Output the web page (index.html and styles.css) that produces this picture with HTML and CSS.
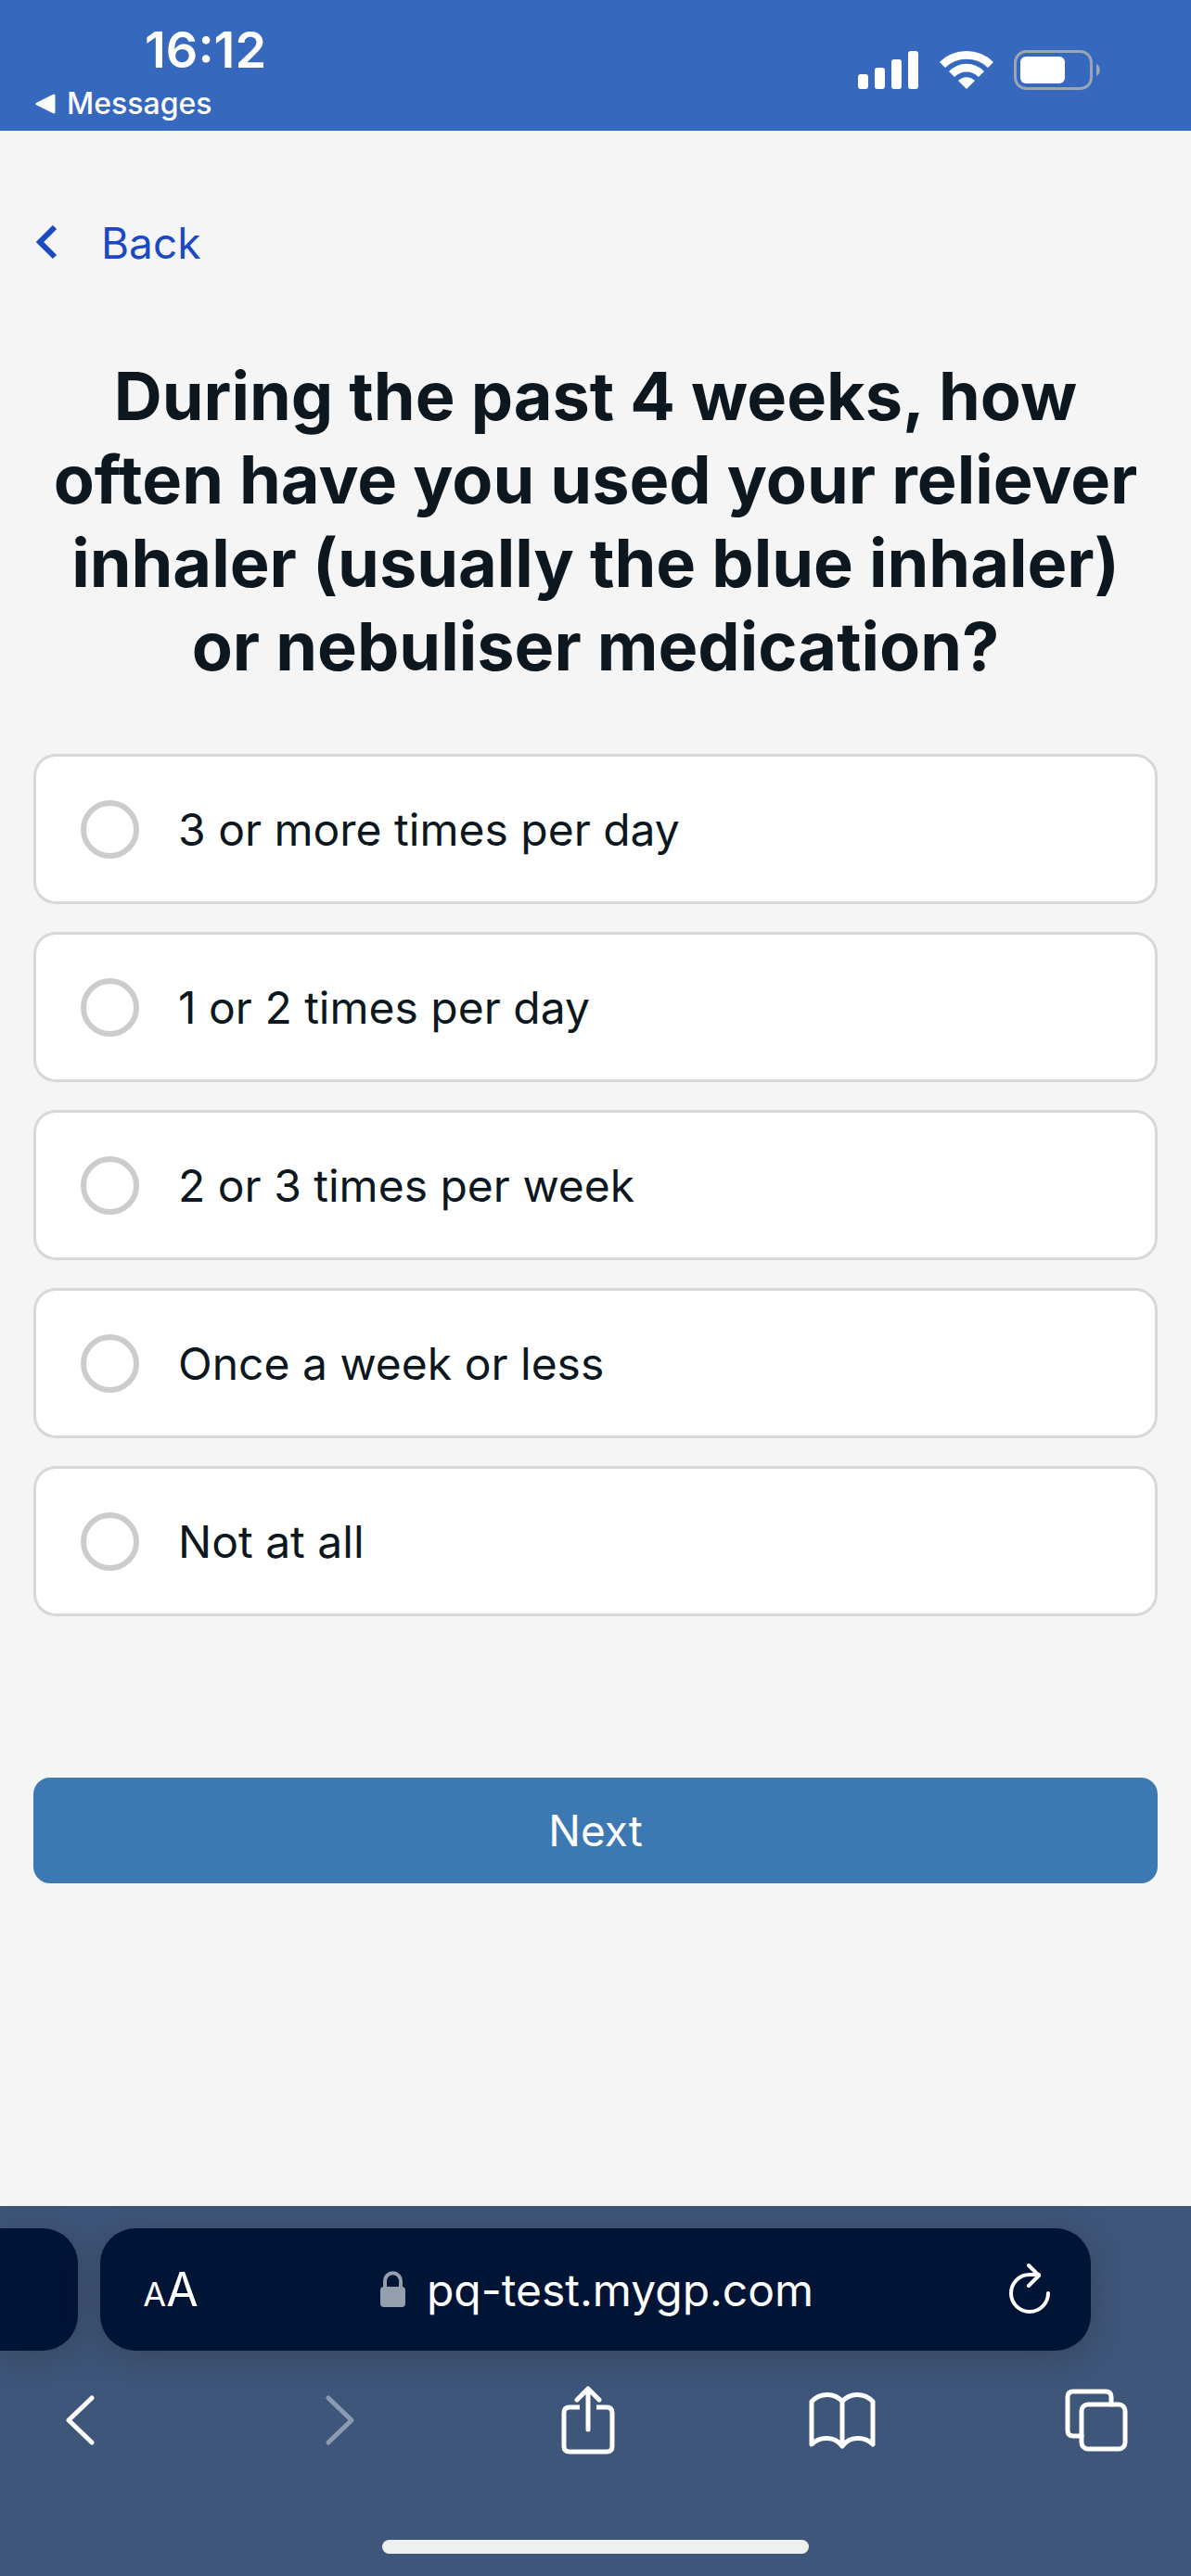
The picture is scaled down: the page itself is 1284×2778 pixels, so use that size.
FILE: index.html
```html
<!DOCTYPE html>
<html lang="en">
<head>
    <meta charset="UTF-8">
    <meta name="viewport" content="width=device-width, initial-scale=1">
    <title>myGP questionnaire</title>
    <link rel="stylesheet" href="styles.css">
</head>
<body>
    <header class="status-bar">
        <div class="status-left">
            <div class="time">16:12</div>
            <a class="return-link" href="#">
                <svg width="22" height="22" viewBox="0 0 22 22"><path d="M20 2v18L2 11z" fill="#fff" stroke="#fff" stroke-width="3" stroke-linejoin="round"/></svg>
                Messages
            </a>
        </div>
        <div class="status-icons">
            <svg width="66" height="44" viewBox="0 0 66 44" fill="#fff">
                <rect x="0" y="26" width="11" height="16" rx="3"/>
                <rect x="18" y="19" width="11" height="23" rx="3"/>
                <rect x="36" y="10" width="11" height="32" rx="3"/>
                <rect x="54" y="1" width="11" height="41" rx="3"/>
            </svg>
            <svg width="58" height="44" viewBox="0 0 58 44" fill="#fff">
                <path d="M0 13A41 41 0 0 1 58 13L52 19A33 33 0 0 0 6 19Z"/>
                <path d="M10 23A26 26 0 0 1 48 23L42 29A18 18 0 0 0 16 29Z"/>
                <path d="M20 33A12.500 12.500 0 0 1 38 33L29 42Z"/>
            </svg>
            <svg width="94" height="44" viewBox="0 0 94 44">
                <rect x="1.500" y="1.500" width="82" height="40" rx="12" fill="none" stroke="#9ba5b3" stroke-width="3"/>
                <rect x="7" y="7" width="48" height="29" rx="6" fill="#fff"/>
                <path d="M89 15c5 2 5 11 0 13z" fill="#9ba5b3"/>
            </svg>
        </div>
    </header>

    <main class="page">
        <a class="back-link" href="#">
            <svg width="24" height="38" viewBox="0 0 24 38"><path d="M20 2L4 18l16 16" fill="none" stroke="#1c49c2" stroke-width="6"/></svg>
            Back
        </a>
        <form class="question-form" onsubmit="return false">
            <h1 id="question">During the past 4 weeks, how often have you used your reliever inhaler (usually the blue inhaler) or nebuliser medication?</h1>
            <div class="options" role="radiogroup" aria-labelledby="question">
                <label class="option"><input type="radio" name="usage" value="1">3 or more times per day</label>
                <label class="option"><input type="radio" name="usage" value="2">1 or 2 times per day</label>
                <label class="option"><input type="radio" name="usage" value="3">2 or 3 times per week</label>
                <label class="option"><input type="radio" name="usage" value="4">Once a week or less</label>
                <label class="option"><input type="radio" name="usage" value="5">Not at all</label>
            </div>
            <button class="next-button" type="submit">Next</button>
        </form>
    </main>

    <footer class="browser-bar">
        <div class="address-row">
            <div class="other-tab"></div>
            <div class="address">
                <button class="text-size" aria-label="Text size"><span class="small-a">A</span>A</button>
                <div class="site">
                    <svg width="28" height="40" viewBox="0 0 28 40">
                        <rect x="0" y="17" width="27" height="22" rx="4" fill="#949eae"/>
                        <path d="M5 18v-6c0-13 17-13 17 0v6" fill="none" stroke="#949eae" stroke-width="4"/>
                    </svg>
                    pq-test.mygp.com
                </div>
                <button class="reload" aria-label="Reload">
                    <svg width="46" height="56" viewBox="0 0 46 56" fill="none" stroke="#fff" stroke-width="4" stroke-linecap="round" stroke-linejoin="round">
                        <path d="M43 32A20 20 0 1 1 23 12h10M22 2l11 11-11 11"/>
                    </svg>
                </button>
            </div>
        </div>
        <nav class="toolbar">
            <button aria-label="Go back"><svg width="32" height="56" viewBox="0 0 32 56"><path d="M29 4L4 28l25 24"/></svg></button>
            <button aria-label="Go forward" disabled><svg width="46" height="56" viewBox="0 0 46 56"><path d="M17 4l25 24-25 24"/></svg></button>
            <button aria-label="Share"><svg width="58" height="74" viewBox="0 0 58 74"><path stroke-linecap="butt" d="M20 23H9q-6 0-6 6v36q0 6 6 6h40q6 0 6-6V29q0-6-6-6H38"/><path d="M29 47V3M17 15L29 3l12 12"/></svg></button>
            <button aria-label="Bookmarks"><svg width="72" height="62" viewBox="0 0 72 62"><path d="M36 11C28 1 12 1 3 11v46c9-9 25-9 33 2 8-11 24-11 33-2V11C60 1 44 1 36 11zv48"/></svg></button>
            <button aria-label="Tabs"><svg width="68" height="68" viewBox="0 0 68 68"><rect x="18" y="17" width="47" height="48" rx="7"/><path d="M50 17V9q0-6-6-6H9q-6 0-6 6v36q0 6 6 6h9"/></svg></button>
        </nav>
        <div class="home-indicator"></div>
    </footer>
</body>
</html>
```

FILE: styles.css
```css
* {
    box-sizing: border-box;
}

body {
    margin: 0;
    min-height: 100vh;
    display: flex;
    flex-direction: column;
    font-family: Inter, "Liberation Sans", sans-serif;
    font-size: 48px;
    color: #0c1720;
    background-color: #f5f5f5;
}

svg {
    display: block;
    flex: none;
}

a {
    text-decoration: none;
}

button {
    padding: 0;
    border: none;
    background: none;
    color: white;
    font-family: inherit;
    font-size: 46px;
    cursor: pointer;
}

.status-bar {
    display: flex;
    justify-content: space-between;
    height: 141px;
    padding: 24px 97px 0 38px;
    background-color: #3668bd;
    color: white;
}

.time {
    padding-left: 118px;
    font-size: 54px;
    font-weight: 600;
    line-height: 60px;
}

.return-link {
    display: flex;
    align-items: center;
    gap: 12px;
    margin-top: 8px;
    color: white;
    font-size: 32px;
    font-weight: 500;
    line-height: 40px;
}

.status-icons {
    display: flex;
    gap: 22px;
    padding-top: 30px;
}

.page {
    flex: 1;
    padding: 88px 36px;
}

.back-link {
    display: inline-flex;
    align-items: center;
    gap: 46px;
    padding-left: 3px;
    color: #1c49c2;
    font-size: 46px;
    line-height: 66px;
}

h1 {
    margin: 87px 0 71px;
    font-size: 72px;
    font-weight: 700;
    line-height: 90px;
    text-align: center;
}

.options {
    display: flex;
    flex-direction: column;
    gap: 30px;
}

.option {
    display: flex;
    align-items: center;
    gap: 42px;
    height: 162px;
    padding: 0 48px;
    border: 3px solid #d8d8d8;
    border-radius: 24px;
    background-color: white;
}

.option input {
    appearance: none;
    width: 63px;
    height: 63px;
    margin: 0;
    border: 6px solid #cccccc;
    border-radius: 50%;
}

.option input:checked {
    border: 18px solid #3c78b2;
}

.next-button {
    width: 100%;
    height: 114px;
    margin-top: 174px;
    border-radius: 18px;
    background-color: #3c78b2;
}

.browser-bar {
    padding-top: 24px;
    background-color: #3e567a;
    overflow: hidden;
}

.address-row {
    display: flex;
    gap: 24px;
    padding-right: 108px;
}

.other-tab, .address {
    height: 132px;
    background-color: #001435;
    box-shadow: 0 6px 36px rgba(50, 60, 70, 0.6);
}

.other-tab {
    width: 84px;
    border-radius: 0 38px 38px 0;
}

.address {
    flex: 1;
    display: flex;
    align-items: center;
    justify-content: space-between;
    padding: 0 43px 0 46px;
    border-radius: 38px;
    color: white;
}

.text-size, .reload {
    width: 60px;
}

.text-size {
    font-size: 50px;
    white-space: nowrap;
}

.small-a {
    font-size: 36px;
}

.reload svg {
    margin-left: auto;
}

.site {
    display: flex;
    align-items: center;
    gap: 22px;
}

.toolbar {
    display: flex;
    justify-content: space-between;
    align-items: center;
    height: 150px;
    padding: 0 66px 0 50px;
}

.toolbar button {
    display: flex;
    justify-content: center;
    width: 72px;
}

.toolbar svg {
    fill: none;
    stroke: white;
    stroke-width: 5;
    stroke-linecap: round;
    stroke-linejoin: round;
}

.toolbar button:disabled svg {
    stroke: #8c9bb0;
}

.home-indicator {
    width: 460px;
    height: 15px;
    margin: 54px auto 24px;
    border-radius: 8px;
    background-color: #eef0ef;
}
```
